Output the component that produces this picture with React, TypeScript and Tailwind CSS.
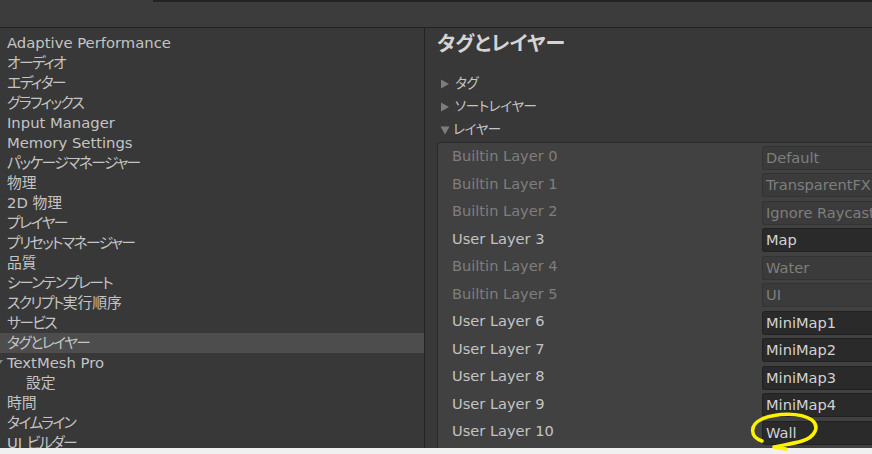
import React from "react";

const leftItems: { label: string; indent?: boolean; selected?: boolean; arrow?: boolean }[] = [
  { label: "Adaptive Performance" },
  { label: "オーディオ" },
  { label: "エディター" },
  { label: "グラフィックス" },
  { label: "Input Manager" },
  { label: "Memory Settings" },
  { label: "パッケージマネージャー" },
  { label: "物理" },
  { label: "2D 物理" },
  { label: "プレイヤー" },
  { label: "プリセットマネージャー" },
  { label: "品質" },
  { label: "シーンテンプレート" },
  { label: "スクリプト実行順序" },
  { label: "サービス" },
  { label: "タグとレイヤー", selected: true },
  { label: "TextMesh Pro", arrow: true },
  { label: "設定", indent: true },
  { label: "時間" },
  { label: "タイムライン" },
  { label: "UI ビルダー" },
];

const layers: { label: string; value: string; user: boolean }[] = [
  { label: "Builtin Layer 0", value: "Default", user: false },
  { label: "Builtin Layer 1", value: "TransparentFX", user: false },
  { label: "Builtin Layer 2", value: "Ignore Raycast", user: false },
  { label: "User Layer 3", value: "Map", user: true },
  { label: "Builtin Layer 4", value: "Water", user: false },
  { label: "Builtin Layer 5", value: "UI", user: false },
  { label: "User Layer 6", value: "MiniMap1", user: true },
  { label: "User Layer 7", value: "MiniMap2", user: true },
  { label: "User Layer 8", value: "MiniMap3", user: true },
  { label: "User Layer 9", value: "MiniMap4", user: true },
  { label: "User Layer 10", value: "Wall", user: true },
];

// Split text into kana runs (narrower, like the proportional UI font) and others.
function KanaText({ text }: { text: string }) {
  const parts = text.match(/[\u3040-\u30ff]+|[^\u3040-\u30ff]+/g) || [];
  return (
    <span>
      {parts.map((p, i) =>
        /[\u3040-\u30ff]/.test(p) ? (
          <span key={i} className="tracking-[-1.6px]">
            {p}
          </span>
        ) : (
          <span key={i}>{p}</span>
        )
      )}
    </span>
  );
}

function TriRight() {
  return (
    <svg width="10" height="10" viewBox="0 0 10 10" className="shrink-0">
      <polygon points="1,0.5 9,5 1,9.5" fill="#7d7d7d" />
    </svg>
  );
}
function TriDown() {
  return (
    <svg width="10" height="10" viewBox="0 0 10 10" className="shrink-0">
      <polygon points="0.5,1.5 9.5,1.5 5,9.5" fill="#7d7d7d" />
    </svg>
  );
}

export default function App() {
  return (
    <div
      className="relative w-[872px] h-[454px] overflow-hidden bg-[#f0f0f0] [font-feature-settings:'palt']"
      style={{ fontFamily: "'DejaVu Sans', 'Noto Sans CJK JP', sans-serif" }}
    >
      <div className="h-[448px] flex flex-col bg-[#383838]">
        {/* toolbar */}
        <div className="h-[28px] shrink-0 bg-[#3c3c3c] border-b border-[#232323] flex flex-col">
          <div className="flex h-[2px]">
            <div className="w-[153px] bg-[#3c3c3c]" />
            <div className="flex-1 bg-[#232323]" />
          </div>
        </div>
        <div className="flex flex-1 min-h-0">
          {/* left list */}
          <div className="w-[425px] shrink-0 border-r border-[#232323] pt-[5px] overflow-hidden">
            {leftItems.map((it) => (
              <div
                key={it.label}
                className={`relative h-[20px] flex items-center text-[14.8px] leading-[20px] text-[#c4c4c4] whitespace-pre ${
                  it.selected ? "bg-[#4d4d4d]" : ""
                } ${it.indent ? "pl-[26px]" : "pl-[7px]"}`}
              >
                {it.arrow && (
                  <svg width="4" height="8" viewBox="0 0 4 8" className="absolute left-0 top-[5px]">
                    <polygon points="0,2 3,2 0,6" fill="#8a8a8a" />
                  </svg>
                )}
                <KanaText text={it.label} />
              </div>
            ))}
          </div>
          {/* right panel */}
          <div className="flex-1 min-w-0 pl-[12px] flex flex-col overflow-hidden">
            <div className="h-[44px] shrink-0 pt-[4px]">
              <div className="text-[20px] leading-[24px] font-bold text-[#d4d4d4] whitespace-nowrap">タグとレイヤー</div>
            </div>
            {[
              { t: "タグ", open: false },
              { t: "ソートレイヤー", open: false },
              { t: "レイヤー", open: true },
            ].map((f) => (
              <div key={f.t} className="h-[23px] shrink-0 flex items-center pl-[3px] gap-[5px] text-[13.5px] text-[#c4c4c4]">
                {f.open ? <TriDown /> : <TriRight />}
                <span className={`tracking-[-0.4px] ${f.open ? "-ml-[2px]" : ""}`}>{f.t}</span>
              </div>
            ))}
            <div className="mt-[1px] flex-1 border-t border-l border-[#2b2b2b] rounded-tl-[4px] bg-[#414141] pt-[1px] pl-[14px]">
              {layers.map((l) => (
                <div key={l.label} className="h-[27.5px] flex items-center whitespace-nowrap">
                  <div
                    className={`w-[310px] shrink-0 text-[14.6px] leading-[20px] -mt-[3px] ${
                      l.user ? "text-[#c4c4c4]" : "text-[#7e7e7e]"
                    }`}
                  >
                    {l.label}
                  </div>
                  <div
                    className={`flex-1 h-[24px] rounded-l-[3px] border border-r-0 flex items-center pl-[3px] text-[14.6px] overflow-hidden ${
                      l.user
                        ? "bg-[#2a2a2a] border-[#212121] text-[#d2d2d2]"
                        : "bg-[#3b3b3b] border-[#333333] text-[#7e7e7e]"
                    }`}
                  >
                    {l.value}
                  </div>
                </div>
              ))}
            </div>
          </div>
        </div>
      </div>
      {/* yellow annotation */}
      <svg className="absolute inset-0 pointer-events-none" width="872" height="454" viewBox="0 0 872 454">
        <path
          d="M 762 441 C 750 437 749 425 762 419 C 776 413 800 412 812 420 C 820 427 815 437 802 441 C 792 444 782 445 774 447 L 786 449"
          fill="none"
          stroke="#fff200"
          strokeWidth="3.5"
          strokeLinecap="round"
          strokeLinejoin="round"
        />
      </svg>
    </div>
  );
}
